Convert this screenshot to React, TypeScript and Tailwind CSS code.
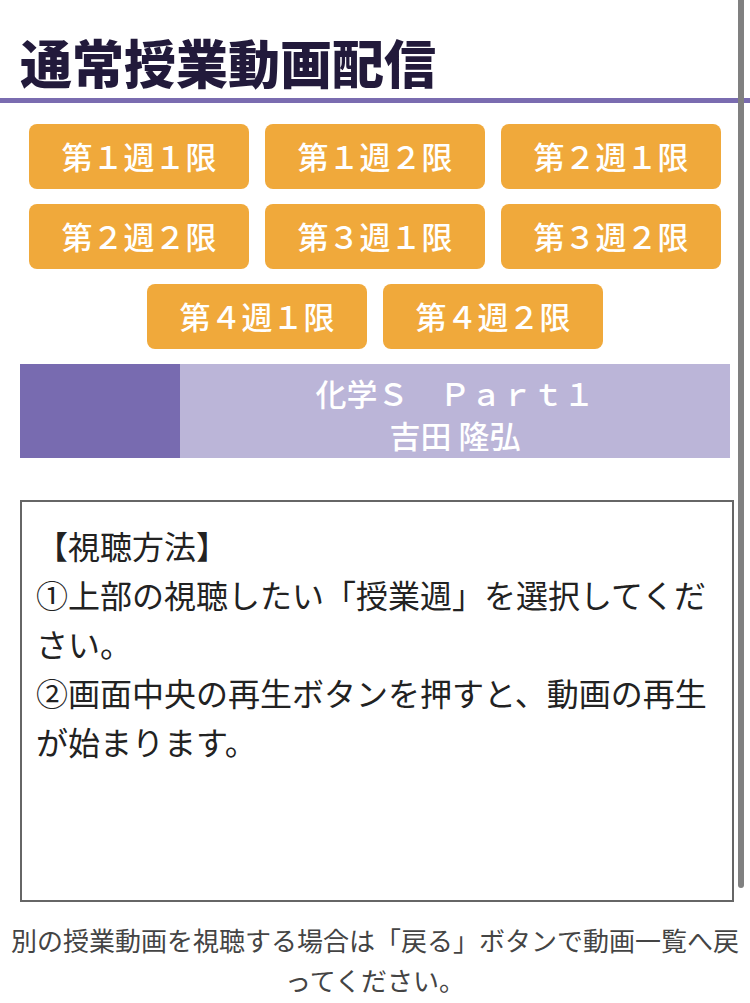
const weeks = [
  "第１週１限",
  "第１週２限",
  "第２週１限",
  "第２週２限",
  "第３週１限",
  "第３週２限",
  "第４週１限",
  "第４週２限",
];

const font = "font-['Noto_Sans_CJK_JP','Noto_Sans',sans-serif]";

export default function App() {
  return (
    <div className={`relative min-h-[1003px] w-[750px] bg-white ${font}`}>
      <div className="border-b-[5px] border-[#7a6cb0] pb-[10px] pl-[20px] pt-[36px]">
        <h1 className="text-[52px] font-black leading-[52px] text-[#221a3b]">
          通常授業動画配信
        </h1>
      </div>

      <div className="mt-[21px] flex flex-wrap justify-center gap-x-[16px] gap-y-[15px] px-[29px]">
        {weeks.map((w) => (
          <button
            key={w}
            className="flex h-[65px] w-[220px] items-center justify-center rounded-[8px] bg-[#f0a93b] text-[31px] font-medium text-white"
          >
            {w}
          </button>
        ))}
      </div>

      <div className="mx-[20px] mt-[15px] flex h-[94px] w-[710px]">
        <div className="w-[160px] bg-[#786bb0]" />
        <div className="flex flex-1 flex-col items-center bg-[#bbb5d8] pt-[8px] text-[31px] font-medium leading-[42px] text-white">
          <p>化学Ｓ　Ｐａｒｔ１</p>
          <p>吉田 隆弘</p>
        </div>
      </div>

      <div className="mx-[20px] mt-[42px] h-[402px] w-[714px] border-2 border-[#666666] px-[14px] pt-[19px] text-[32px] leading-[49px] text-[#222222]">
        <p>【視聴方法】</p>
        <p>①上部の視聴したい「授業週」を選択してください。</p>
        <p>②画面中央の再生ボタンを押すと、動画の再生が始まります。</p>
      </div>

      <p className="mt-[18px] px-[8px] text-center text-[26px] leading-[40px] text-[#444444]">
        別の授業動画を視聴する場合は「戻る」ボタンで動画一覧へ戻ってください。
      </p>

      <div className="absolute right-[6px] top-0 h-[888px] w-[6px] rounded-b-full bg-[#808080]" />
    </div>
  );
}
